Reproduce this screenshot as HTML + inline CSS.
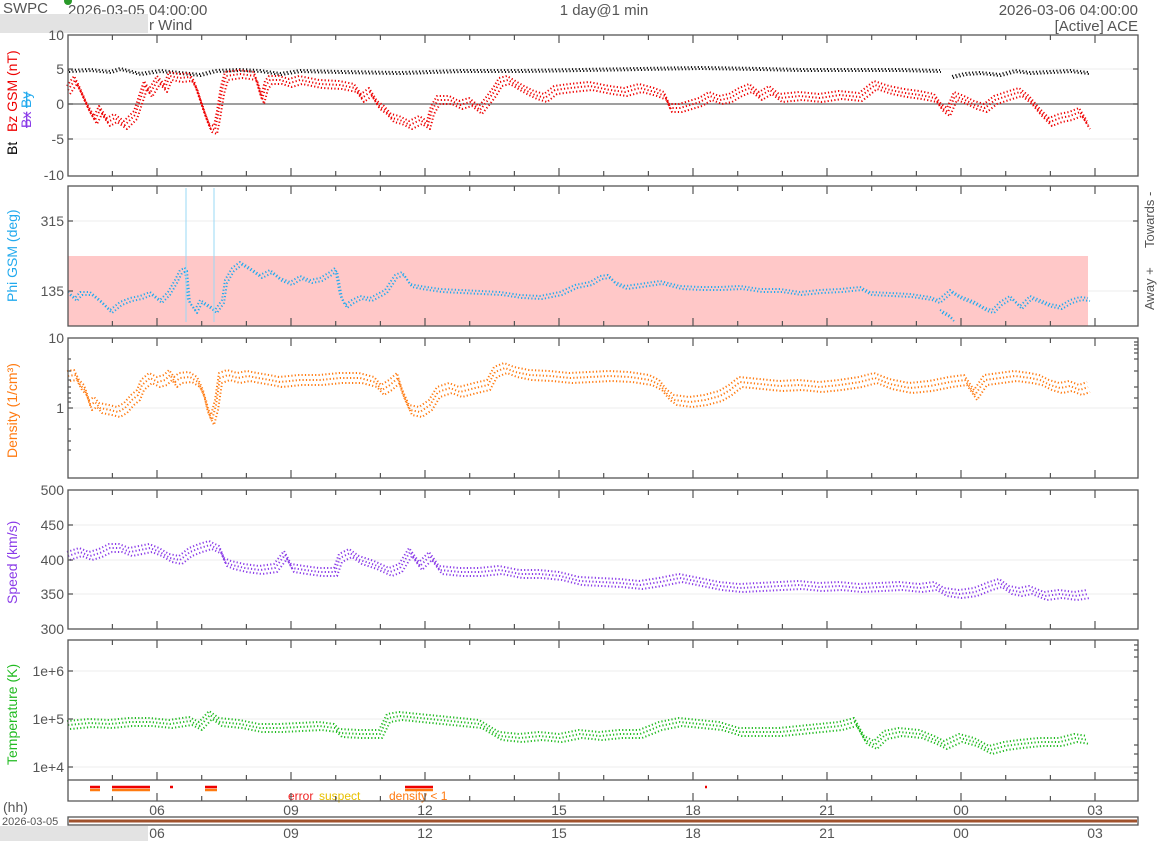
<!DOCTYPE html>
<html><head><meta charset="utf-8"><style>
html,body{margin:0;padding:0;background:#fff;width:1158px;height:841px;overflow:hidden}
svg{display:block}
text{font-family:"Liberation Sans",sans-serif;fill:#555}
.d{fill:none;stroke-width:2;stroke-dasharray:1.2 2.2;stroke-linejoin:round}
</style></head><body>
<svg width="1158" height="841" viewBox="0 0 1158 841">
<defs>
<path id="tt" d="M112.4 0v5M157 0v8M201.7 0v5M246.4 0v5M291 0v8M335.7 0v5M380.4 0v5M425 0v8M469.7 0v5M514.4 0v5M559 0v8M603.7 0v5M648.4 0v5M693 0v8M737.7 0v5M782.4 0v5M827 0v8M871.7 0v5M916.4 0v5M961 0v8M1005.7 0v5M1050.4 0v5M1095 0v8" stroke="#555" stroke-width="1.2"/>
<path id="bt" d="M112.4 0v-5M157 0v-8M201.7 0v-5M246.4 0v-5M291 0v-8M335.7 0v-5M380.4 0v-5M425 0v-8M469.7 0v-5M514.4 0v-5M559 0v-8M603.7 0v-5M648.4 0v-5M693 0v-8M737.7 0v-5M782.4 0v-5M827 0v-8M871.7 0v-5M916.4 0v-5M961 0v-8M1005.7 0v-5M1050.4 0v-5M1095 0v-8" stroke="#555" stroke-width="1.2"/>
<path id="p1k" d="M68 70 L90 69 L110 71 L120 68 L140 73 L160 70 L180 72 L200 74 L215 70 L240 69 L260 70 L280 73 L300 70 L340 71 L400 72 L460 70 L520 70 L580 69 L640 68 L700 67 L760 68 L800 69 L860 69 L900 69 L940 70 M952 76 L965 73 L980 72 L1000 74 L1015 70 L1030 72 L1050 71 L1070 70 L1088 72"/>
<path id="p1r" d="M68 90 L75 80 L80 90 L88 108 L95 120 L100 110 L108 122 L115 118 L125 125 L135 115 L140 100 L145 85 L150 93 L158 80 L165 88 L170 76 L180 78 L190 77 L195 85 L200 100 L205 115 L210 128 L215 130 L218 115 L222 90 L226 76 L240 74 L255 76 L262 100 L266 85 L270 80 L280 80 L290 83 L300 80 L320 84 L340 85 L355 88 L362 98 L370 92 L378 105 L385 110 L392 118 L400 120 L410 125 L420 120 L428 125 L432 110 L438 100 L450 100 L460 105 L470 102 L480 110 L488 100 L494 92 L500 82 L508 80 L518 86 L525 90 L535 95 L545 98 L555 90 L570 88 L590 86 L610 90 L625 92 L640 88 L655 92 L665 96 L670 108 L680 108 L690 105 L700 102 L710 96 L720 100 L730 98 L740 92 L750 88 L760 96 L770 90 L780 98 L800 96 L820 98 L840 95 L860 97 L875 85 L890 90 L905 93 L920 95 L935 98 L942 108 L948 112 L955 96 L965 100 L975 105 L985 108 L995 100 L1010 95 L1020 92 L1030 100 L1040 112 L1050 122 L1060 118 L1070 116 L1080 112 L1088 125"/>
<path id="p2" d="M68 292 L75 298 L80 292 L90 292 L100 300 L110 310 L120 302 L130 298 L140 296 L150 292 L160 300 L168 292 L175 280 L180 270 L185 268 L188 300 L195 310 L200 300 L210 306 L215 310 L222 300 L225 280 L232 268 L240 262 L250 268 L260 275 L270 270 L280 278 L290 282 L300 276 L310 280 L320 278 L330 272 L335 268 L340 295 L345 305 L352 300 L360 296 L370 298 L385 290 L395 275 L402 272 L410 284 L420 286 L440 289 L460 290 L480 291 L500 292 L520 295 L540 296 L560 292 L575 285 L590 282 L600 276 L608 275 L615 282 L625 286 L640 284 L660 281 L680 286 L700 287 L720 287 L740 286 L760 289 L780 289 L800 292 L820 290 L840 289 L860 287 L870 292 L890 293 L910 294 L930 297 L938 300 L950 290 L960 296 L975 302 L985 308 L992 310 L1000 302 L1010 296 L1020 306 L1030 296 L1040 300 L1050 304 L1060 306 L1070 300 L1080 297 L1088 298 M940 310 L948 314 L952 318"/>
<path id="p3" d="M68 376 L75 375 L80 385 L85 390 L90 405 L95 402 L100 408 L110 410 L118 412 L125 408 L132 400 L138 395 L142 385 L150 378 L158 382 L165 380 L170 375 L175 382 L180 378 L190 377 L198 382 L204 395 L208 412 L212 420 L216 405 L220 378 L228 375 L238 378 L248 376 L258 378 L270 380 L280 382 L300 380 L320 380 L340 378 L360 378 L375 382 L382 390 L390 385 L398 378 L402 392 L410 410 L420 412 L430 405 L438 392 L450 388 L460 392 L475 388 L488 385 L495 372 L505 368 L515 372 L530 375 L550 376 L570 378 L590 377 L610 376 L630 377 L650 380 L660 385 L668 395 L675 400 L690 402 L705 400 L720 396 L730 390 L740 382 L760 384 L780 386 L800 385 L820 387 L840 385 L860 382 L875 378 L890 384 L910 388 L930 386 L950 382 L965 380 L975 395 L985 380 L1000 378 L1015 376 L1030 378 L1040 380 L1050 385 L1060 388 L1070 386 L1080 390 L1088 387"/>
<path id="p4" d="M68 556 L80 552 L90 556 L100 553 L110 548 L120 548 L130 552 L140 550 L150 548 L160 552 L170 558 L180 560 L190 552 L200 548 L210 545 L220 550 L225 562 L232 565 L245 568 L260 570 L275 568 L285 555 L292 568 L305 570 L320 572 L335 572 L340 558 L350 553 L360 560 L375 565 L390 572 L400 568 L410 552 L420 566 L430 556 L440 570 L460 572 L480 572 L500 570 L520 574 L540 574 L560 576 L580 581 L600 582 L620 583 L640 585 L660 582 L680 578 L700 582 L720 586 L740 588 L760 587 L780 586 L800 585 L820 587 L840 586 L860 588 L880 587 L900 586 L920 588 L935 586 L945 592 L960 594 L975 592 L990 586 L1000 583 L1010 590 L1020 592 L1030 590 L1045 596 L1060 594 L1075 596 L1088 594"/>
<path id="p5" d="M68 725 L90 723 L110 724 L130 722 L150 722 L170 724 L190 721 L200 726 L210 715 L220 722 L240 724 L260 728 L280 728 L300 727 L320 726 L335 728 L340 733 L360 734 L380 734 L388 718 L400 716 L420 718 L440 720 L460 722 L480 724 L490 730 L500 736 L520 738 L540 736 L560 738 L580 734 L600 736 L620 734 L640 734 L660 726 L680 722 L700 724 L720 726 L740 732 L760 732 L780 732 L800 730 L820 728 L840 726 L855 722 L865 740 L875 745 L885 735 L900 732 L920 734 L935 740 L945 745 L960 738 L975 742 L990 750 L1005 746 L1020 744 L1040 742 L1060 742 L1075 738 L1088 740"/>
</defs>
<!-- header -->
<text x="3" y="13" font-size="15">SWPC</text>
<circle cx="68" cy="1" r="4" fill="#2a9a2a"/>
<text x="68" y="15" font-size="15">2026-03-05 04:00:00</text>
<rect x="0" y="14" width="148" height="19" fill="#e3e3e3"/>
<text x="149" y="30" font-size="15">r Wind</text>
<text x="604" y="15" font-size="15" text-anchor="middle">1 day@1 min</text>
<text x="1138" y="15" font-size="15" text-anchor="end">2026-03-06 04:00:00</text>
<text x="1138" y="31" font-size="15" text-anchor="end">[Active] ACE</text>

<g stroke="#eee" stroke-width="1">
<path d="M68 69H1138M68 139H1138M68 221H1138M68 291H1138M68 408H1138M68 525H1138M68 560H1138M68 594H1138M68 671H1138M68 719H1138M68 767H1138"/>
</g>
<line x1="68" y1="104" x2="1138" y2="104" stroke="#666" stroke-width="1.2"/>
<rect x="68" y="256" width="1020" height="70" fill="#ffc8c8"/>

<g class="d" style="fill:none">
<use href="#p1k" class="d" stroke="#111"/>
<use href="#p1k" class="d" stroke="#111" y="2" x="1"/>
<use href="#p1r" class="d" stroke="#e00"/>
<use href="#p1r" class="d" stroke="#e00" y="4" x="2"/>
<use href="#p1r" class="d" stroke="#e00" y="-4" x="-1"/>
<use href="#p2" class="d" stroke="#22aaee"/>
<use href="#p2" class="d" stroke="#22aaee" y="3" x="2"/>
<use href="#p3" class="d" stroke="#ff7a10"/>
<use href="#p3" class="d" stroke="#ff7a10" y="5" x="2"/>
<use href="#p3" class="d" stroke="#ff7a10" y="-5" x="-1"/>
<use href="#p4" class="d" stroke="#8a3be8"/>
<use href="#p4" class="d" stroke="#8a3be8" y="4" x="2"/>
<use href="#p4" class="d" stroke="#8a3be8" y="-4" x="-1"/>
<use href="#p5" class="d" stroke="#22bb22"/>
<use href="#p5" class="d" stroke="#22bb22" y="4" x="2"/>
<use href="#p5" class="d" stroke="#22bb22" y="-4" x="-1"/>
</g>
<path stroke="#9ad8f6" stroke-width="1" d="M186 188V322M214 188V322"/>

<!-- flags -->
<g stroke-width="2.5">
<path stroke="#e00" d="M90 787h10M112 787h38M170 787h3M205 787h12M405 787h28M705 787h2"/>
<path stroke="#ff7a10" d="M90 790h10M112 790h38M205 790h12M405 790h28"/>
</g>
<text x="288" y="800" font-size="12" style="fill:#ee2222">error</text>
<text x="319" y="800" font-size="12" style="fill:#e8c000">suspect</text>
<text x="389" y="800" font-size="12" style="fill:#ff7a10">density &lt; 1</text>

<g fill="none" stroke="#555" stroke-width="1.3">
<rect x="68" y="35" width="1070" height="141"/>
<rect x="68" y="186" width="1070" height="140"/>
<rect x="68" y="338" width="1070" height="140"/>
<rect x="68" y="490" width="1070" height="139"/>
<rect x="68" y="640" width="1070" height="140"/>
<path d="M68 780V801H1138V780"/>
<rect x="68" y="817" width="1070" height="8"/>
</g>
<line x1="69" y1="821" x2="1137" y2="821" stroke="#a0522d" stroke-width="3"/>
<use href="#tt" y="35"/><use href="#bt" y="176"/>
<use href="#tt" y="186"/><use href="#bt" y="326"/>
<use href="#tt" y="338"/><use href="#bt" y="478"/>
<use href="#tt" y="490"/><use href="#bt" y="629"/>
<use href="#tt" y="640"/><use href="#bt" y="780"/>
<use href="#bt" y="801"/>
<g stroke="#555" stroke-width="1.2">
<path d="M68 69h5M68 104h5M68 139h5M1138 69h-5M1138 104h-5M1138 139h-5"/>
<path d="M1138 221h-5M1138 291h-5M68 221h5M68 291h5"/>
<path d="M68 408h5M68 359h3M68 371h3M68 380h3M68 387h3M68 393h3M68 398h3M68 402h3M68 429h3M68 441h3M68 450h3M1138 408h-5M1138 342h-4M1138 345h-4M1138 349h-4M1138 353h-4M1138 359h-4M1138 371h-4M1138 387h-4M1138 398h-4"/>
<path d="M68 525h5M68 560h5M68 594h5M1138 525h-5M1138 560h-5M1138 594h-5"/>
<path d="M68 671h5M68 719h5M68 767h5M1138 671h-5M1138 719h-5M1138 767h-5M1138 645h-4M1138 650h-4M1138 657h-4M1138 700h-4M1138 707h-4M1138 745h-4M1138 754h-4M1138 773h-4"/>
</g>

<g font-size="14" text-anchor="end">
<text x="64" y="40">10</text><text x="64" y="74">5</text><text x="64" y="109">0</text><text x="64" y="144">-5</text><text x="64" y="180">-10</text>
<text x="64" y="226">315</text><text x="64" y="296">135</text>
<text x="64" y="343">10</text><text x="64" y="413">1</text>
<text x="64" y="495">500</text><text x="64" y="530">450</text><text x="64" y="565">400</text><text x="64" y="599">350</text><text x="64" y="634">300</text>
<text x="64" y="676">1e+6</text><text x="64" y="724">1e+5</text><text x="64" y="772">1e+4</text>
</g>
<text transform="translate(17,155) rotate(-90)" font-size="14" style="fill:#000">Bt</text>
<text transform="translate(17,132) rotate(-90)" font-size="14" style="fill:#e00">Bz GSM (nT)</text>
<text transform="translate(31,128) rotate(-90)" font-size="14" style="fill:#8a3be8;text-decoration:line-through">Bx</text>
<text transform="translate(31,108) rotate(-90)" font-size="14" style="fill:#22aaee;text-decoration:line-through">By</text>
<text transform="translate(17,302) rotate(-90)" font-size="14" style="fill:#22aaee">Phi GSM (deg)</text>
<text transform="translate(17,458) rotate(-90)" font-size="14" style="fill:#ff7a10">Density (1/cm³)</text>
<text transform="translate(17,604) rotate(-90)" font-size="14" style="fill:#8a3be8">Speed (km/s)</text>
<text transform="translate(17,765) rotate(-90)" font-size="14" style="fill:#22bb22">Temperature (K)</text>
<text transform="translate(1154,248) rotate(-90)" font-size="13">Towards -</text>
<text transform="translate(1154,310) rotate(-90)" font-size="13">Away +</text>

<g font-size="14" text-anchor="middle">
<text x="157" y="815">06</text><text x="291" y="815">09</text><text x="425" y="815">12</text><text x="559" y="815">15</text><text x="693" y="815">18</text><text x="827" y="815">21</text><text x="961" y="815">00</text><text x="1095" y="815">03</text>
<text x="157" y="838">06</text><text x="291" y="838">09</text><text x="425" y="838">12</text><text x="559" y="838">15</text><text x="693" y="838">18</text><text x="827" y="838">21</text><text x="961" y="838">00</text><text x="1095" y="838">03</text>
</g>
<text x="3" y="812" font-size="14">(hh)</text>
<text x="2" y="825" font-size="11">2026-03-05</text>
<rect x="0" y="826" width="148" height="15" fill="#e3e3e3"/>
</svg>
</body></html>
